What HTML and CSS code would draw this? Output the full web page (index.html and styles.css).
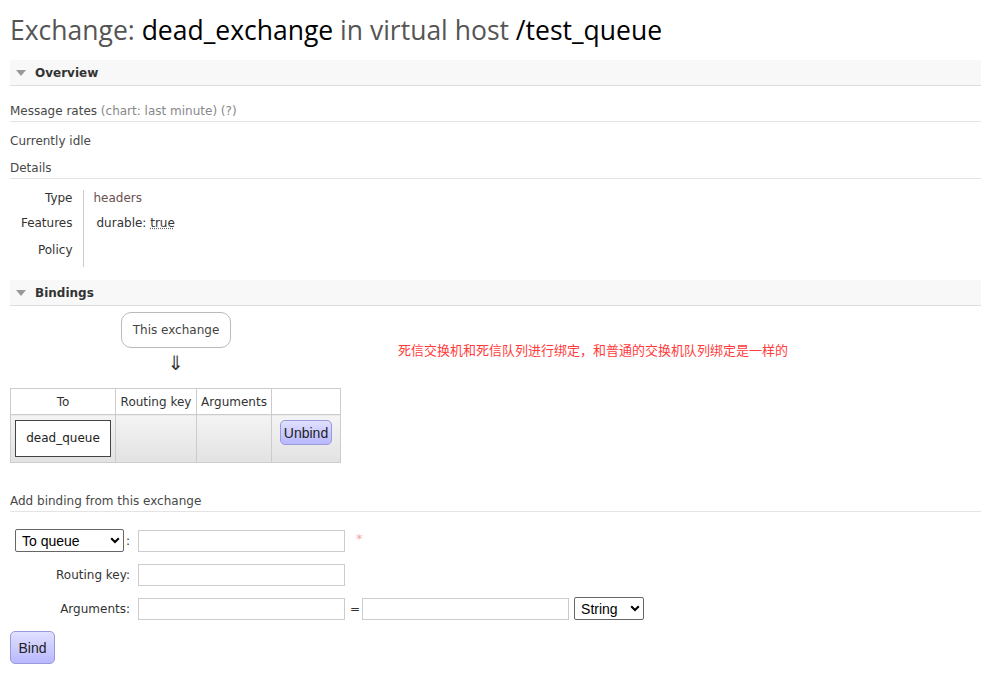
FILE: index.html
```html
<!DOCTYPE html>
<html>
<head>
<meta charset="utf-8">
<link rel="stylesheet" href="styles.css">
</head>
<body>
<h1 class="title">Exchange: <b>dead_exchange</b> in virtual host <b>/test_queue</b></h1>

<div class="section">
  <h2 class="sec-head"><span class="tri"></span>Overview</h2>
  <div class="sec-body">
    <h3 class="sub sub-rates">Message rates <span class="muted">(chart: last minute) (?)</span></h3>
    <p class="idle">Currently idle</p>
    <h3 class="sub sub-details">Details</h3>
    <table class="facts">
      <tr class="r1"><th>Type</th><td class="type">headers</td></tr>
      <tr class="r2"><th>Features</th><td><span class="feat">durable: <abbr>true</abbr></span></td></tr>
      <tr class="r3"><th>Policy</th><td></td></tr>
    </table>
  </div>
</div>

<div class="section section-b">
  <h2 class="sec-head"><span class="tri"></span>Bindings</h2>
  <div class="sec-body bindings">
    <div class="diagram">
      <div class="left">
        <div class="this-ex">This exchange</div>
        <div class="arrow">⇓</div>
      </div>
      <div class="note">死信交换机和死信队列进行绑定，和普通的交换机队列绑定是一样的</div>
    </div>
    <table class="list">
      <thead>
        <tr><th class="c1">To</th><th class="c2">Routing key</th><th class="c3">Arguments</th><th class="c4"></th></tr>
      </thead>
      <tbody>
        <tr>
          <td class="c1"><span class="qbox">dead_queue</span></td>
          <td></td><td></td>
          <td class="c4"><button class="btn unbind">Unbind</button></td>
        </tr>
      </tbody>
    </table>

    <h3 class="sub sub-add">Add binding from this exchange</h3>
    <form class="form">
      <div class="row">
        <div class="lbl lbl-sel">
          <span class="selwrap sw-to">
            <select class="sel"><option>To queue</option></select>
            <svg class="chev" width="10" height="7" viewBox="0 0 10 7"><polyline points="1.2,1.2 5,5 8.8,1.2" fill="none" stroke="#000" stroke-width="2"/></svg>
          </span>:</div>
        <input class="inp" type="text"><span class="star">*</span>
      </div>
      <div class="row">
        <div class="lbl">Routing key:</div>
        <input class="inp" type="text">
      </div>
      <div class="row">
        <div class="lbl">Arguments:</div>
        <input class="inp" type="text"><span class="eq">=</span><input class="inp inp2" type="text">
        <span class="selwrap sw-str">
          <select class="sel"><option>String</option></select>
          <svg class="chev" width="10" height="7" viewBox="0 0 10 7"><polyline points="1.2,1.2 5,5 8.8,1.2" fill="none" stroke="#000" stroke-width="2"/></svg>
        </span>
      </div>
      <button class="btn bind" type="button">Bind</button>
    </form>
  </div>
</div>
</body>
</html>
```

FILE: styles.css
```css
html, body { margin: 0; padding: 0; background: #fff; }
body {
  padding: 0 0 0 10px;
  font-family: "DejaVu Sans", Verdana, sans-serif;
  font-size: 12px;
  color: #484848;
}
.title {
  margin: 0;
  padding: 13px 0 0 0;
  height: 60px;
  box-sizing: border-box;
  font-family: "Open Sans", "Noto Sans", sans-serif;
  font-weight: normal;
  font-size: 26.5px;
  line-height: 34px;
  color: #555;
}
.title b { font-weight: normal; color: #000; }

.sec-head {
  margin: 0;
  height: 26px;
  box-sizing: border-box;
  background: #f8f8f8;
  border-bottom: 1px solid #ddd;
  display: flex;
  align-items: center;
  font-size: 12px;
  font-weight: bold;
  color: #333;
  padding-left: 6px;
}
.tri {
  width: 0; height: 0;
  border-left: 5px solid transparent;
  border-right: 5px solid transparent;
  border-top: 6px solid #999;
  margin-right: 9px;
  margin-top: 1px;
}
.section-b { margin-top: 13px; }

.sub {
  margin: 0;
  font-size: 12px;
  font-weight: normal;
  color: #484848;
  border-bottom: 1px solid #e4e4e4;
  line-height: 15px;
}
.sub-rates { padding: 18px 0 2px 0; }
.muted { color: #888; }
.idle { margin: 0; padding: 12px 0 0 0; line-height: 15px; }
.sub-details { padding: 12px 0 2px 0; }

.facts { border-collapse: collapse; margin-top: 11px; }
.facts th, .facts td { vertical-align: top; line-height: 15px; box-sizing: border-box; }
.facts th {
  font-weight: normal;
  text-align: right;
  color: #333;
  padding: 0 10px 0 0;
  width: 73px;
  border-right: 1px solid #ccc;
}
.facts td { padding: 0 0 0 10px; color: #333; }
.facts .r1 th, .facts .r1 td { height: 20px; padding-top: 1px; }
.facts .r2 th, .facts .r2 td { height: 26px; padding-top: 6px; }
.facts .r3 th, .facts .r3 td { height: 31px; padding-top: 7px; }
.facts td.type { color: #6a5050; }
.feat { padding-left: 3px; }
abbr { text-decoration: underline dotted #666; }

.diagram { display: flex; align-items: flex-start; padding-top: 6px; }
.left { width: 110px; flex: none; display: flex; flex-direction: column; align-items: center; margin-left: 111px; }
.this-ex {
  border: 1px solid #bbb;
  border-radius: 10px;
  height: 36px;
  line-height: 34px;
  box-sizing: border-box;
  width: 110px;
  text-align: center;
  color: #444;
}
.arrow { font-size: 20px; line-height: 24px; margin-top: 3px; color: #333; font-family: "DejaVu Sans", sans-serif; }
.note {
  margin-left: 167px;
  margin-top: 29px;
  color: #ff3b3b;
  font-family: "Noto Sans CJK SC", sans-serif;
  font-size: 13px;
  line-height: 18px;
}

.list { border-collapse: collapse; margin-top: 13px; }
.list th {
  font-weight: normal;
  color: #333;
  border: 1px solid #ccc;
  height: 26px;
  padding: 0 4px;
  background: #fff;
  box-sizing: border-box;
}
.list td {
  border: 1px solid #ccc;
  height: 48px;
  box-sizing: border-box;
  background: linear-gradient(#f4f4f4, #e2e2e2);
  padding: 0;
  vertical-align: middle;
}
.list .c1 { width: 105px; }
.list .c2 { width: 81px; }
.list .c3 { width: 75px; }
.list .c4 { width: 69px; }
.list td.c1 { padding: 0 4px; }
.list td.c4 { vertical-align: top; padding: 5px 0 0 8px; }
.qbox {
  display: block;
  background: #fff;
  border: 1px solid #444;
  height: 37px;
  line-height: 35px;
  box-sizing: border-box;
  text-align: center;
  color: #222;
}
.btn {
  font-family: "Liberation Sans", Arial, sans-serif;
  font-size: 14px;
  color: #222;
  background: linear-gradient(#e0e0ff, #b8b8ff);
  border: 1px solid #9999dd;
  border-radius: 5px;
  padding: 0;
  cursor: pointer;
}
.unbind { width: 52px; height: 25px; }
.bind { width: 45px; height: 33px; margin-top: 3px; display: block; }

.sub-add { padding: 31px 0 2px 0; }
.form { padding-top: 17px; }
.row { display: flex; align-items: center; height: 23px; margin-bottom: 11px; }
.lbl { width: 120px; text-align: right; color: #333; display: flex; justify-content: flex-end; align-items: center; }
.lbl-sel { justify-content: space-between; }
.selwrap { position: relative; display: inline-block; height: 23px; }
.sel {
  appearance: none;
  -webkit-appearance: none;
  font-family: "Liberation Sans", Arial, sans-serif;
  font-size: 14px;
  height: 23px;
  border: 1px solid #666;
  border-radius: 2px;
  background: #fff;
  color: #000;
  padding: 0 0 0 6px;
  margin: 0;
  width: 100%;
  box-sizing: border-box;
}
.chev { position: absolute; right: 4px; top: 8px; pointer-events: none; }
.sw-to { width: 110px; margin-left: 5px; margin-right: 2px; }
.sw-str { width: 70px; margin-left: 5px; }
.inp {
  width: 207px;
  height: 22px;
  box-sizing: border-box;
  border: 1px solid #ccc;
  margin: 0 0 0 8px;
  padding: 0 3px;
}
.star { color: #f7a8a8; margin-left: 11px; margin-top: -4px; font-size: 13px; }
.eq { margin-left: 5px; margin-right: -2px; color: #333; }
.inp2 { margin-left: 4px; }
```
